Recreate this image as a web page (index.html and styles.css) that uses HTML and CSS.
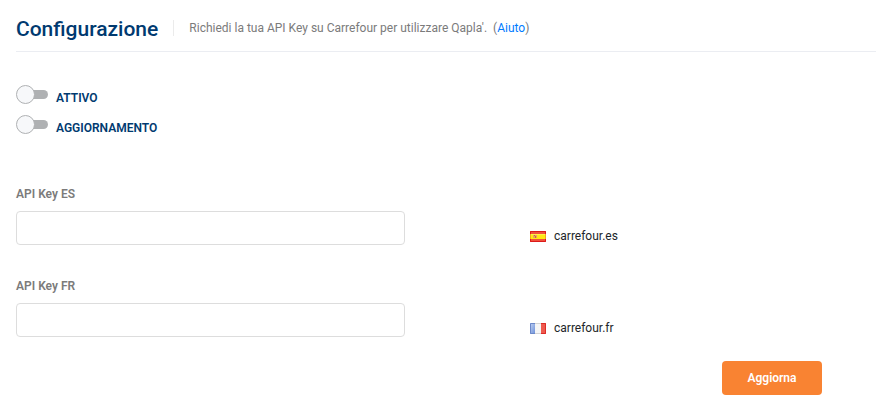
FILE: index.html
```html
<!DOCTYPE html>
<html lang="it">
<head>
<meta charset="utf-8">
<title>Configurazione</title>
<link rel="stylesheet" href="styles.css">
</head>
<body>
<header class="head">
  <h1 class="title">Configurazione</h1>
  <p class="desc">Richiedi la tua API Key su Carrefour per utilizzare Qapla'. &nbsp;(<a class="link" href="#">Aiuto</a>)</p>
</header>
<form class="form">
  <div class="toggle"><span class="switch"></span><span class="toggle-label">ATTIVO</span></div>
  <div class="toggle"><span class="switch"></span><span class="toggle-label">AGGIORNAMENTO</span></div>
  <div class="row first">
    <div class="field"><label class="label" for="es">API Key ES</label><input class="input" id="es" type="text"></div>
    <div class="site">
      <svg class="flag" width="16" height="11" viewBox="0 0 16 11"><path fill="#f0503c" d="M0 0h16v11H0z"/><path fill="#ffe814" d="M0 3h16v5H0z"/><path fill="#fff04a" d="M1 3h14v1H1z"/><path fill="#e8a85a" d="M3 4h4v3H3z"/><path fill="#c8604c" d="M4 4h1v1H4zM5 5h1v2H5z"/><path fill="none" stroke="#dc1a1a" d="M.5 3V.5h15V3M.5 8v2.500h15V8"/><path fill="none" stroke="#f0a818" d="M.5 3v5M15.500 3v5"/></svg>
      <span>carrefour.es</span>
    </div>
  </div>
  <div class="row">
    <div class="field"><label class="label" for="fr">API Key FR</label><input class="input" id="fr" type="text"></div>
    <div class="site">
      <svg class="flag" width="16" height="11" viewBox="0 0 16 11"><defs><linearGradient id="b" x2="1" y2="1"><stop stop-color="#c4d4f4"/><stop offset="1" stop-color="#6c90d8"/></linearGradient></defs><path fill="url(#b)" d="M0 0h5v11H0z"/><path fill="#f5f5f5" d="M5 0h6v11H5z"/><path fill="#ee5a4e" d="M11 0h5v11h-5z"/><path fill="none" stroke="#6c88c8" d="M5 .5H.5v10H5"/><path fill="none" stroke="#d4d4d4" d="M5 .5h6M5 10.500h6"/><path fill="none" stroke="#dc2c28" d="M11 .5h4.500v10H11"/></svg>
      <span>carrefour.fr</span>
    </div>
  </div>
  <div class="actions"><button class="button" type="button">Aggiorna</button></div>
</form>
</body>
</html>
```

FILE: styles.css
```css
*, *::before, *::after { box-sizing: border-box; }
body { margin: 0; padding: 0 0 0 16px; background: #fff; font-family: Roboto, sans-serif; font-size: 12px; color: #212529; }
.head { display: flex; align-items: center; height: 52px; padding-top: 5px; border-bottom: 1px solid #ebedf2; }
.title { margin: 0; padding-top: 2px; font-size: 21px; line-height: 24px; font-weight: 500; color: #003a70; }
.desc { margin: 0 0 0 15px; padding-left: 15px; border-left: 1px solid #ebebeb; line-height: 16px; color: #7b7b7b; }
.link { color: #007bff; text-decoration: none; }
.form { padding-top: 32px; }
.toggle { display: flex; height: 30px; }
.switch { position: relative; width: 32px; height: 20px; margin-right: 8px; }
.switch::before { content: ""; position: absolute; left: 8px; top: 6px; width: 24px; height: 9px; border-radius: 5px; background: #afb1b3; }
.switch::after { content: ""; position: absolute; left: 0; top: 1px; width: 19px; height: 19px; border: 1px solid #afb1b3; border-radius: 50%; background: #f7f8fa; }
.toggle-label { padding-top: 6px; line-height: 16px; font-weight: 600; color: #003a70; }
.row { display: flex; height: 92px; }
.first { margin-top: 42px; }
.field { width: 389px; margin-right: 125px; }
.label { display: block; height: 25px; line-height: 16px; font-weight: 600; color: #7b7b7b; }
.input { display: block; width: 389px; height: 34px; padding: 6px 12px; border: 1px solid #ddd; border-radius: 4px; background: #fff; font: inherit; }
.site { display: flex; align-items: center; gap: 8px; height: 16px; margin-top: 42px; }
.flag { display: block; margin-top: 1px; }
.actions { display: flex; justify-content: flex-end; margin-top: -9px; padding-right: 54px; }
.button { width: 100px; height: 34px; padding: 0; border: 0; border-radius: 4px; background: #f98332; color: #fff; font: 600 12px Roboto, sans-serif; }
```
